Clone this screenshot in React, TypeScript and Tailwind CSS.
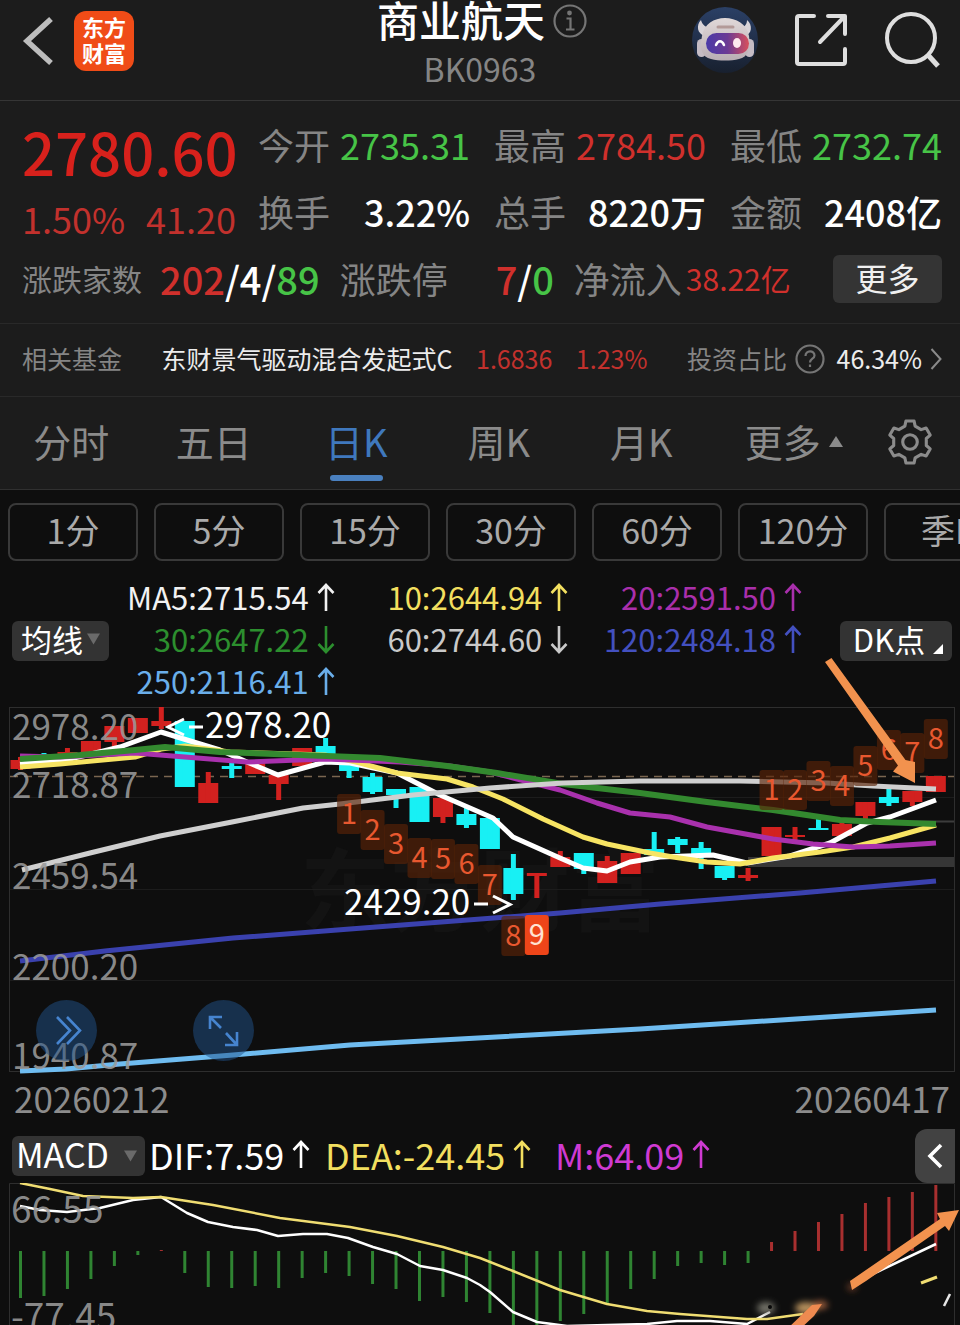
import React from "react";

const RED = "#d2211f";
const CYAN = "#18f0f4";
const STEP = 23.47;
const xAt = (i: number) => 20.5 + i * STEP;

// [direction, body top, body bottom, wick top, wick bottom]
type Candle = ["u" | "d", number, number, number, number];
const candles: Candle[] = [
  ["u", 760, 769, 757, 770], ["d", 755, 758, 753, 759], ["u", 752, 757, 748, 758], ["u", 741, 753, 741, 753],
  ["u", 726, 742, 726, 748], ["u", 718, 733, 718, 733], ["u", 721, 726, 707, 729], ["d", 721, 787, 721, 787],
  ["u", 783, 803, 772, 803], ["d", 766, 769, 762, 778], ["u", 763, 774, 763, 774], ["u", 775, 784, 775, 800],
  ["u", 748, 766, 748, 766], ["d", 746, 755, 738, 755], ["d", 765, 771, 765, 778], ["d", 777, 792, 773, 794],
  ["d", 789, 795, 789, 808], ["d", 787, 822, 787, 822], ["u", 798, 817, 798, 823], ["d", 814, 825, 808, 828],
  ["d", 818, 849, 818, 849], ["d", 868, 894, 854, 900], ["u", 873, 876, 873, 898], ["u", 857, 867, 851, 867],
  ["d", 853, 869, 853, 874], ["u", 861, 883, 856, 883], ["u", 853, 874, 853, 874], ["d", 849, 855, 832, 855],
  ["d", 839, 845, 837, 853], ["d", 848, 856, 842, 869], ["d", 866, 878, 866, 880], ["u", 875, 878, 868, 881],
  ["u", 827, 856, 827, 856], ["u", 835, 837, 827, 840], ["d", 828, 830, 818, 830], ["u", 824, 836, 819, 836],
  ["u", 802, 816, 802, 820], ["d", 797, 803, 788, 806], ["u", 791, 802, 791, 806], ["u", 776, 792, 776, 792],
];

const averages: { color: string; width: number; points: string }[] = [
  { color: "#ffffff", width: 5, points: "20,764 70,759 120,747 161,732 187,740 220,750 247,762 278,775 325,762 350,763 397,773 440,795 493,818 513,837 560,858 583,868 607,871 630,862 660,857 713,855 747,863 790,856 830,843 867,823 890,817 936,800" },
  { color: "#f7e463", width: 5, points: "20,767 60,764 135,757 161,749 185,746 230,752 325,755 360,763 397,773 447,779 473,787 503,799 543,819 583,837 607,844 650,853 673,857 707,862 740,864 773,858 820,852 853,847 890,838 936,825" },
  { color: "#a931ad", width: 5, points: "20,756 60,757 135,753 185,757 247,762 325,759 400,762 450,766 490,772 517,779 560,790 597,803 630,813 670,817 707,827 773,839 813,844 853,847 890,846 936,843" },
  { color: "#33892f", width: 6, points: "20,759 80,755 135,750 165,747 220,752 300,755 380,758 447,766 497,773 563,784 640,793 707,802 773,810 840,820 880,822 936,824" },
  { color: "#cfcfcf", width: 5, points: "22,870 90,853 160,836 232,822 303,808 340,804 413,795 490,788 563,783 640,781 740,781 827,783 873,786 936,789" },
  { color: "#3a41ae", width: 5, points: "20,961 105,951 233,938 350,929 560,913 660,904 800,893 936,881" },
  { color: "#6fbcf0", width: 5, points: "20,1071 66,1069 120,1064 233,1055 350,1045 640,1029 936,1010" },
];

// [label, candle index, centre y]
const counts: [string, number, number][] = [
  ["1", 14, 814], ["2", 15, 830], ["3", 16, 844], ["4", 17, 858], ["5", 18, 859], ["6", 19, 864], ["7", 20, 885], ["8", 21, 936],
  ["9", 22, 935],
  ["1", 32, 790], ["2", 33, 790], ["3", 34, 781], ["4", 35, 786], ["5", 36, 766], ["6", 37, 750], ["7", 38, 753], ["8", 39, 739],
];

const histogram = [
  1298, 1296, 1289, 1279, 1266, 1255, 1250, 1273, 1287, 1288, 1286, 1288, 1278, 1273, 1276, 1284, 1289, 1301, 1297, 1302,
  1313, 1328, 1328, 1321, 1314, 1303, 1289, 1279, 1266, 1263, 1265, 1263, 1242, 1231, 1222, 1214, 1203, 1197, 1192, 1185,
];
const ZERO = 1251;

const polar = (deg: number, r: number) => {
  const a = (deg * Math.PI) / 180;
  return `${(24 + r * Math.cos(a)).toFixed(2)} ${(24 + r * Math.sin(a)).toFixed(2)}`;
};
const gearPath =
  "M" +
  [0, 1, 2, 3, 4, 5]
    .map((k) => -90 + k * 60)
    .map((a) => `${polar(a - 11, 20.5)}L${polar(a + 11, 20.5)}L${polar(a + 18, 16)}L${polar(a + 42, 16)}`)
    .join("L") +
  "Z";

function Arrow({ down = false }: { down?: boolean }) {
  return (
    <svg viewBox="0 0 18 30" className="ml-2 h-[30px] w-[18px] shrink-0" fill="none" stroke="currentColor" strokeWidth="2.6" aria-hidden="true">
      <path d={down ? "M9 2V28M1.500 20L9 28L16.500 20" : "M9 29V3M1.500 11L9 3L16.500 11"} />
    </svg>
  );
}

function Robot() {
  return (
    <svg viewBox="0 0 66 66" className="size-[66px]" aria-hidden="true">
      <defs>
        <linearGradient id="visor" x1="0" x2="1">
          <stop offset="0" stopColor="#4a3aa8" />
          <stop offset=".5" stopColor="#6b3a94" />
          <stop offset="1" stopColor="#d8505c" />
        </linearGradient>
        <linearGradient id="shell" x1="0" y1="0" x2="0" y2="1">
          <stop offset="0" stopColor="#e0d8d8" />
          <stop offset="1" stopColor="#b9aeb4" />
        </linearGradient>
        <linearGradient id="disc" x1="0" y1="0" x2="0" y2="1">
          <stop offset="0" stopColor="#2b4066" />
          <stop offset="1" stopColor="#18202f" />
        </linearGradient>
      </defs>
      <circle cx="33" cy="33" r="33" fill="url(#disc)" />
      <path d="M9 13C4 18 5 27 13 29L20 21C13 21 10 17 9 13ZM55 13C61 18 60 27 53 29L46 21C53 21 55 17 55 13Z" fill="#d9d4d8" />
      <rect x="5" y="32" width="9" height="18" rx="4.500" fill="#c5bcc4" />
      <rect x="53" y="32" width="9" height="18" rx="4.500" fill="#c5bcc4" />
      <path d="M33 11C44 11 55 17 57 29C59 42 56 50 47 52C39 54 27 54 19 52C10 50 7 42 10 29C12 17 22 11 33 11Z" fill="url(#shell)" />
      <path d="M26 20H41" stroke="#b39a98" strokeWidth="3" strokeLinecap="round" />
      <rect x="14" y="26" width="43" height="21" rx="10.500" fill="url(#visor)" />
      <path d="M24 38C26 33 30 33 32 38" fill="none" stroke="#fff" strokeWidth="2.500" strokeLinecap="round" />
      <ellipse cx="45" cy="36" rx="4" ry="5" fill="#ffe9ee" />
    </svg>
  );
}

function Header() {
  return (
    <header className="grid h-[101px] grid-cols-[1fr_auto_1fr] border-b border-[#353535] px-5">
      <div className="flex items-start gap-5 pt-[11px]">
        <button aria-label="返回" className="pt-1">
          <svg viewBox="0 0 34 52" className="h-[52px] w-[34px]" fill="none" stroke="#bdbdbd" strokeWidth="5.500">
            <path d="M31 4L7 26L31 48" />
          </svg>
        </button>
        <a href="#home" aria-label="东方财富" className="flex size-[60px] flex-col items-center rounded-xl bg-[#f04c17] pt-[2px] text-[22px] font-bold leading-[26px] text-white">
          <span>东方</span>
          <span>财富</span>
        </a>
      </div>
      <div className="flex flex-col items-center">
        <div className="flex items-center gap-2 pl-1">
          <h1 className="text-[42px] font-medium leading-[36px] text-white">商业航天</h1>
          <button aria-label="说明">
            <svg viewBox="0 0 34 34" className="mt-1 size-[34px]" fill="none" stroke="#757575" strokeWidth="2.200">
              <circle cx="17" cy="17" r="15.500" />
              <path d="M13.500 14.500H17.500V25M13 25.500H21.500" />
              <circle cx="16.500" cy="9" r="1.300" fill="#757575" />
            </svg>
          </button>
        </div>
        <p className="mt-[6px] text-[32px] leading-[48px] text-[#858585]">BK0963</p>
      </div>
      <div className="flex items-start justify-end gap-9 pt-[7px]">
        <button aria-label="智能助手">
          <Robot />
        </button>
        <button aria-label="分享" className="pt-[6px]">
          <svg viewBox="0 0 54 54" className="size-[54px]" fill="none" stroke="#dedede" strokeWidth="4" strokeLinecap="round" strokeLinejoin="round">
            <path d="M20 3H5Q3 3 3 5V49Q3 51 5 51H49Q51 51 51 49V36M34 3H51V21M50 4L26 29" />
          </svg>
        </button>
        <button aria-label="搜索" className="pt-[5px]">
          <svg viewBox="0 0 56 56" className="size-[56px]" fill="none" stroke="#dedede" strokeWidth="4">
            <circle cx="27" cy="26" r="24" />
            <path d="M44 43L54 54" strokeWidth="5" />
          </svg>
        </button>
      </div>
    </header>
  );
}

function Stat({ label, value, tone }: { label: string; value: string; tone: string }) {
  return (
    <div className="flex items-center justify-between whitespace-nowrap">
      <dt className="text-[36px] text-[#858585]">{label}</dt>
      <dd className={tone}>{value}</dd>
    </div>
  );
}

function Quote() {
  return (
    <section className="border-b border-[#292929] pb-[11px] pl-[22px] pr-[18px] pt-[10px]">
      <div className="grid grid-cols-[214px_1fr] gap-x-[22px]">
        <div className="whitespace-nowrap">
          <p className="text-[58px] font-medium leading-[80px] text-[#d8211c]">2780.60</p>
          <p className="flex justify-between text-[36px] leading-[54px] text-[#c2312d]">
            <span>1.50%</span>
            <span>41.20</span>
          </p>
        </div>
        <dl className="grid grid-cols-3 gap-x-6 leading-[67px]">
          <Stat label="今开" value="2735.31" tone="text-[36px] text-[#47c447]" />
          <Stat label="最高" value="2784.50" tone="text-[36px] text-[#d0302c]" />
          <Stat label="最低" value="2732.74" tone="text-[36px] text-[#47c447]" />
          <Stat label="换手" value="3.22%" tone="text-[36px] font-medium text-white" />
          <Stat label="总手" value="8220万" tone="text-[36px] font-medium text-white" />
          <Stat label="金额" value="2408亿" tone="text-[36px] font-medium text-white" />
        </dl>
      </div>
      <div className="flex items-center whitespace-nowrap leading-[67px]">
        <span className="text-[30px] text-[#858585]">涨跌家数</span>
        <span className="ml-[18px] text-[38px] font-medium text-white">
          <span className="text-[#d0302c]">202</span>/4/<span className="text-[#47c447]">89</span>
        </span>
        <span className="ml-5 text-[36px] text-[#858585]">涨跌停</span>
        <span className="ml-12 text-[38px] font-medium text-white">
          <span className="text-[#d0302c]">7</span>/<span className="text-[#47c447]">0</span>
        </span>
        <span className="ml-5 text-[36px] text-[#858585]">净流入</span>
        <span className="ml-1 text-[30px] text-[#d0302c]">38.22亿</span>
        <button className="ml-auto h-12 w-[109px] rounded-md bg-[#343434] pb-1 text-[32px] leading-[44px] text-[#f0f0f0]">更多</button>
      </div>
    </section>
  );
}

function Fund() {
  return (
    <section className="flex h-[73px] items-center justify-between whitespace-nowrap border-b border-[#292929] pb-[2px] pl-[22px] pr-[18px] text-[25px]">
      <span className="text-[#858585]">相关基金</span>
      <a href="#fund" className="ml-4 text-[#ececec]">东财景气驱动混合发起式C</a>
      <span className="text-[#c2312d]">1.6836</span>
      <span className="text-[#c2312d]">1.23%</span>
      <span className="ml-4 flex items-center gap-2 text-[#858585]">
        投资占比
        <svg viewBox="0 0 30 30" className="size-[30px]" fill="none" stroke="#757575" strokeWidth="2.200" aria-hidden="true">
          <circle cx="15" cy="15" r="13.500" />
          <path d="M10.500 12C10.500 6 19.500 6 19.500 11.500C19.500 15 15 14.500 15 18.500M15 20.500V23" />
        </svg>
      </span>
      <a href="#ratio" className="-ml-3 flex items-center gap-2 text-[#ececec]">
        46.34%
        <svg viewBox="0 0 12 22" className="h-[22px] w-3" fill="none" stroke="#8a8a8a" strokeWidth="2" aria-hidden="true">
          <path d="M1.500 1L10.500 11L1.500 21" />
        </svg>
      </a>
    </section>
  );
}

function Tabs() {
  return (
    <nav className="grid h-[93px] grid-cols-[repeat(6,1fr)_105px] border-b border-[#303030] text-[38px] text-[#8b8b8b]">
      {["分时", "五日", "日K", "周K", "月K"].map((t) => (
        <button key={t} className={t === "日K" ? "flex flex-col items-center pt-[14px] leading-[60px] text-[#3f78bd]" : "flex flex-col items-center pt-[14px] leading-[60px]"}>
          {t}
          {t === "日K" && <span className="mt-1 h-[6px] w-[53px] rounded-full bg-[#4a80bf]" />}
        </button>
      ))}
      <button className="flex items-start justify-center gap-2 whitespace-nowrap pl-5 pt-[14px] leading-[60px]">
        更多
        <svg viewBox="0 0 14 12" className="mt-6 h-3 w-[14px]" fill="#8b8b8b" aria-hidden="true">
          <path d="M7 1L14 12H0Z" />
        </svg>
      </button>
      <button aria-label="设置" className="flex justify-center pl-1 pt-[20px]">
        <svg viewBox="0 0 48 48" className="size-[50px]" fill="none" stroke="#8b8b8b" strokeWidth="3" strokeLinejoin="round">
          <path d={gearPath} />
          <circle cx="24" cy="24" r="7" />
        </svg>
      </button>
    </nav>
  );
}

function Periods() {
  return (
    <div className="flex gap-4 overflow-hidden px-2 pt-[13px]">
      {["1分", "5分", "15分", "30分", "60分", "120分", "季K"].map((p) => (
        <button key={p} className="h-[58px] w-[130px] shrink-0 rounded-lg border-2 border-[#393939] pb-1 text-[34px] leading-[50px] text-[#aaaaaa]">
          {p}
        </button>
      ))}
    </div>
  );
}

const legend = [
  { text: "MA5:2715.54", tone: "flex items-center justify-end text-[#f2f2f2]" },
  { text: "10:2644.94", tone: "flex items-center justify-end text-[#f2df5f]" },
  { text: "20:2591.50", tone: "flex items-center justify-end text-[#a92fac]" },
  { text: "30:2647.22", tone: "flex items-center justify-end text-[#2c8f2e]", down: true },
  { text: "60:2744.60", tone: "flex items-center justify-end text-[#c9c9c9]", down: true },
  { text: "120:2484.18", tone: "flex items-center justify-end text-[#4350c0]" },
  { text: "250:2116.41", tone: "flex items-center justify-end text-[#6aaeea]" },
];

function Legend() {
  return (
    <div className="flex items-center pl-3 pr-2 pt-[15px]">
      <button className="flex h-10 w-[97px] items-center justify-center gap-1 rounded-md bg-[#333333] pb-1 text-[31px] leading-[36px] text-white">
        均线
        <svg viewBox="0 0 14 12" className="h-3 w-[13px]" fill="#6a6a6a" aria-hidden="true">
          <path d="M0 0H14L7 12Z" />
        </svg>
      </button>
      <div className="-ml-2 grid flex-1 grid-cols-3 pb-1 text-[31px] leading-[42px]">
        {legend.map((l) => (
          <span key={l.text} className={l.tone}>
            {l.text}
            <Arrow down={l.down} />
          </span>
        ))}
      </div>
      <button className="ml-[38px] flex h-10 w-28 items-center justify-center gap-2 rounded-md bg-[#333333] pb-1 pl-1 text-[31px] leading-[36px] text-white">
        DK点
        <svg viewBox="0 0 10 10" className="mt-5 size-[10px]" fill="#ffffff" aria-hidden="true">
          <path d="M10 0V10H0Z" />
        </svg>
      </button>
    </div>
  );
}

function PriceChart() {
  return (
    <div className="relative">
      <svg viewBox="0 706 960 372" className="pointer-events-none relative block w-full overflow-visible" role="img" aria-label="日K线图">
        <text x="300" y="924" fontSize="90" fontWeight="700" fill="#131313">东方财富</text>
        <g stroke="#1c1c1c">
          <path d="M10 797.500H954M10 889.500H954M10 980.500H954" />
        </g>
        <path d="M880 821.500H954" stroke="#3c3c3c" strokeWidth="2" />
        <rect x="9.500" y="707.500" width="945" height="364" fill="none" stroke="#2e2e2e" />
        <rect x="748" y="857" width="206" height="10" fill="#363636" />
        <path d="M10 776.500H954" stroke="#7a6650" strokeWidth="1.500" strokeDasharray="8 6" />
        {candles.map(([dir, top, bottom, wickTop, wickBottom], i) => (
          <g key={i} fill={dir === "u" ? RED : CYAN}>
            <rect x={xAt(i) - 10} y={top} width="20" height={bottom - top} />
            <rect x={xAt(i) - 2.5} y={wickTop} width="5" height={wickBottom - wickTop} />
          </g>
        ))}
        {averages.map((a) => (
          <polyline key={a.color} points={a.points} fill="none" stroke={a.color} strokeWidth={a.width} strokeLinejoin="round" />
        ))}
        {counts.map(([n, i, y]) => (
          <g key={`${n}-${i}`}>
            <rect x={xAt(i) - 12} y={y - 20} width="24" height="40" rx="3" fill={n === "9" ? "#ee4519" : "#5a2408"} fillOpacity={n === "9" ? 1 : 0.65} />
            <text x={xAt(i)} y={y + 10} fontSize="29" textAnchor="middle" fill={n === "9" ? "#ffe3d2" : "#e8582f"}>{n}</text>
          </g>
        ))}
        <g fontSize="35" fill="#9a9a9a" fillOpacity=".88">
          <text x="12" y="740">2978.20</text>
          <text x="12" y="798">2718.87</text>
          <text x="12" y="889">2459.54</text>
          <text x="12" y="980">2200.20</text>
          <text x="12" y="1069">1940.87</text>
        </g>
        <g fontSize="35" fill="#ffffff">
          <text x="205" y="738">2978.20</text>
          <text x="344" y="915">2429.20</text>
        </g>
        <path d="M184 719L168 727L184 735M189 727H203M474 904H488M493 896L510 904.500L493 913" fill="none" stroke="#ffffff" strokeWidth="3" />
        <path d="M825 662L831.500 658L905.500 760L915 762L915 783L893 771.500L898 765.500Z" fill="#f2924e" />
      </svg>
      <button aria-label="快进" className="absolute left-9 top-[294px] size-[61px] rounded-full bg-[#1f518a]/50">
        <svg viewBox="0 0 61 61" fill="none" stroke="#4684cf" strokeWidth="2.600">
          <path d="M21 17L34 30.500L21 44M31 17L44 30.500L31 44" />
        </svg>
      </button>
      <button aria-label="全屏" className="absolute left-[193px] top-[294px] size-[61px] rounded-full bg-[#1f518a]/50">
        <svg viewBox="0 0 61 61" fill="none" stroke="#4684cf" strokeWidth="2.600">
          <path d="M29 17H17V29M17 17L28 28M44 32V45H32M44 45L33 33" />
        </svg>
      </button>
    </div>
  );
}

function MacdBar() {
  return (
    <div className="flex h-[55px] items-center whitespace-nowrap pl-3 pr-[5px] text-[36px]">
      <button className="mr-1 flex h-10 w-[133px] items-center justify-between rounded-md bg-[#333333] pb-1 pl-1 pr-2 text-[34px] leading-[36px] text-white">
        MACD
        <svg viewBox="0 0 14 12" className="mt-1 h-3 w-[13px]" fill="#6a6a6a" aria-hidden="true">
          <path d="M0 0H14L7 12Z" />
        </svg>
      </button>
      <span className="flex w-[176px] items-center pb-1 text-white">DIF:7.59<Arrow /></span>
      <span className="flex w-[230px] items-center pb-1 text-[#f2df5f]">DEA:-24.45<Arrow /></span>
      <span className="flex items-center pb-1 text-[#cf3ad2]">M:64.09<Arrow /></span>
      <button aria-label="收起" className="ml-auto flex h-[54px] w-10 items-center justify-center rounded-l-xl bg-[#424242]">
        <svg viewBox="0 0 16 26" className="h-[26px] w-4" fill="none" stroke="#ffffff" strokeWidth="3.600">
          <path d="M14 2L3 13L14 24" />
        </svg>
      </button>
    </div>
  );
}

function MacdChart() {
  return (
    <svg viewBox="0 1183 960 142" className="block w-full" role="img" aria-label="MACD">
      <defs>
        <filter id="soft" x="-50%" y="-50%" width="200%" height="200%">
          <feGaussianBlur stdDeviation="3" />
        </filter>
      </defs>
      <path d="M9.500 1325V1183.500H954.500V1325" fill="none" stroke="#2e2e2e" />
      {histogram.map((v, i) => {
        const up = v < ZERO;
        return <rect key={i} x={xAt(i) - 1.5} y={Math.min(v, ZERO)} width="3" height={Math.max(1, Math.abs(v - ZERO))} fill={up ? "#a82f2f" : "#2f8432"} />;
      })}
      <g fill="none" strokeWidth="2.500" strokeLinejoin="round">
        <polyline stroke="#ffffff" points="20,1206 40,1210 67,1212 100,1208 133,1200 161,1197 187,1213 208,1222 233,1227 257,1230 278,1236 303,1234 327,1234 348,1238 373,1247 397,1254 420,1266 443,1270 467,1278 480,1285 490,1292 513,1312 537,1322 567,1326 647,1324 677,1321 710,1321 747,1324 770,1312" />
        <polyline stroke="#ffffff" points="868,1277 877,1272 936,1244" />
        <polyline stroke="#f0dd72" points="20,1183 50,1189 83,1196 133,1198 161,1197 213,1205 280,1218 350,1227 397,1236 443,1247 480,1258 513,1271 560,1290 607,1304 647,1311 680,1314 747,1319 767,1319 803,1314" />
      </g>
      <g fontSize="37" fill="#9a9a9a" fillOpacity=".88">
        <text x="11" y="1223">66.55</text>
        <text x="11" y="1330">-77.45</text>
      </g>
      <g filter="url(#soft)">
        <ellipse cx="766" cy="1308" rx="9" ry="6" fill="#8a887c" opacity=".8" />
        <ellipse cx="806" cy="1308" rx="11" ry="6" fill="#e0b070" opacity=".8" />
        <ellipse cx="820" cy="1305" rx="8" ry="4" fill="#c9764a" opacity=".8" />
        <ellipse cx="852" cy="1287" rx="5" ry="4" fill="#9a5230" opacity=".6" />
      </g>
      <circle cx="770" cy="1307" r="2" fill="#080808" />
      <path d="M786 1330L812 1305L822 1304L814 1316L799 1330Z" fill="#ee8a50" />
      <path d="M850 1281L940 1219L937 1213L959 1210L949 1231L945 1226L866 1281L852 1290Z" fill="#f2924e" />
      <path d="M921 1283L937 1277" stroke="#f0dd72" strokeWidth="3" />
      <path d="M944 1306L950 1294" stroke="#e6e6e6" strokeWidth="2.500" />
    </svg>
  );
}

export default function App() {
  return (
    <main lang="zh-CN" className="min-h-screen overflow-hidden bg-[#0e0e0e] font-['Noto_Sans_CJK_SC',sans-serif]">
      <div className="bg-[#1c1c1c]">
        <Header />
        <Quote />
        <Fund />
        <Tabs />
      </div>
      <Periods />
      <Legend />
      <PriceChart />
      <div className="flex justify-between pl-[14px] pr-[10px] text-[35px] leading-[40px] text-[#8c8c8c]">
        <time dateTime="2026-02-12">20260212</time>
        <time dateTime="2026-04-17">20260417</time>
      </div>
      <div className="pt-[10px]">
        <MacdBar />
      </div>
      <MacdChart />
    </main>
  );
}
